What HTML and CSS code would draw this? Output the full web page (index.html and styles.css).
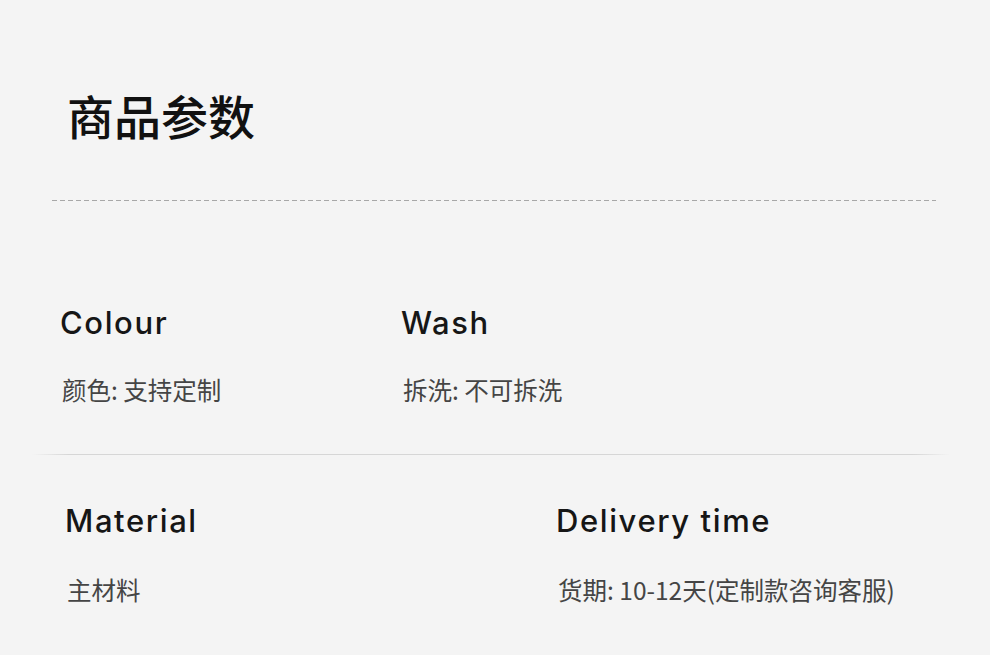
FILE: index.html
```html
<!DOCTYPE html>
<html lang="zh-CN">
  <head>
    <meta charset="UTF-8" />
    <meta name="viewport" content="width=device-width, initial-scale=1.0" />
    <title>商品参数</title>
    <link rel="stylesheet" href="styles.css">
  </head>
  <body>
    <div class="page">
      <h1 class="title">商品参数</h1>
      <div class="dashed"></div>

      <div class="spec-row row-top">
        <div class="spec">
          <h3>Colour</h3>
          <p>颜色: 支持定制</p>
        </div>
        <div class="spec">
          <h3>Wash</h3>
          <p>拆洗: 不可拆洗</p>
        </div>
      </div>

      <div class="solid"></div>

      <div class="spec-row row-bottom">
        <div class="spec">
          <h3>Material</h3>
          <p>主材料</p>
        </div>
        <div class="spec">
          <h3>Delivery time</h3>
          <p>货期: 10-12天(定制款咨询客服)</p>
        </div>
      </div>
    </div>
  </body>
</html>
```

FILE: styles.css
```css
* {
  box-sizing: border-box;
}

body {
  margin: 0;
  background: #f4f4f4;
  font-family: "Inter", "Noto Sans CJK SC", sans-serif;
  color: #1a1a1a;
}

.page {
  width: 990px;
  height: 655px;
  overflow: hidden;
}

.title {
  margin: 0;
  padding: 91px 0 0 67px;
  font-family: "Noto Sans CJK SC", sans-serif;
  font-size: 47px;
  line-height: 47px;
  font-weight: 500;
  color: #111;
}

.dashed {
  margin: 62px 54px 0 52px;
  height: 1px;
  background: repeating-linear-gradient(90deg, #a8a8a8 0 5px, transparent 5px 8px);
}

.spec-row {
  display: grid;
}

.row-top {
  grid-template-columns: 341px 1fr;
  padding: 104px 0 0 60px;
  height: 253px;
}

.row-bottom {
  grid-template-columns: 491px 1fr;
  padding: 48px 0 0 65px;
}

.spec h3 {
  margin: 0;
  font-size: 31px;
  line-height: 36px;
  font-weight: 500;
  letter-spacing: 1.6px;
  color: #161616;
}

.spec p {
  margin: 34px 0 0 2px;
  font-family: "Noto Sans CJK SC", sans-serif;
  font-size: 24.5px;
  line-height: 29px;
  color: #454545;
}

.row-bottom .spec p {
  margin-top: 36px;
}

.solid {
  margin: 0 40px 0 32px;
  height: 1px;
  background: linear-gradient(90deg, rgba(210, 210, 210, 0), #d6d6d6 4%, #d6d6d6 96%, rgba(210, 210, 210, 0));
}
```
